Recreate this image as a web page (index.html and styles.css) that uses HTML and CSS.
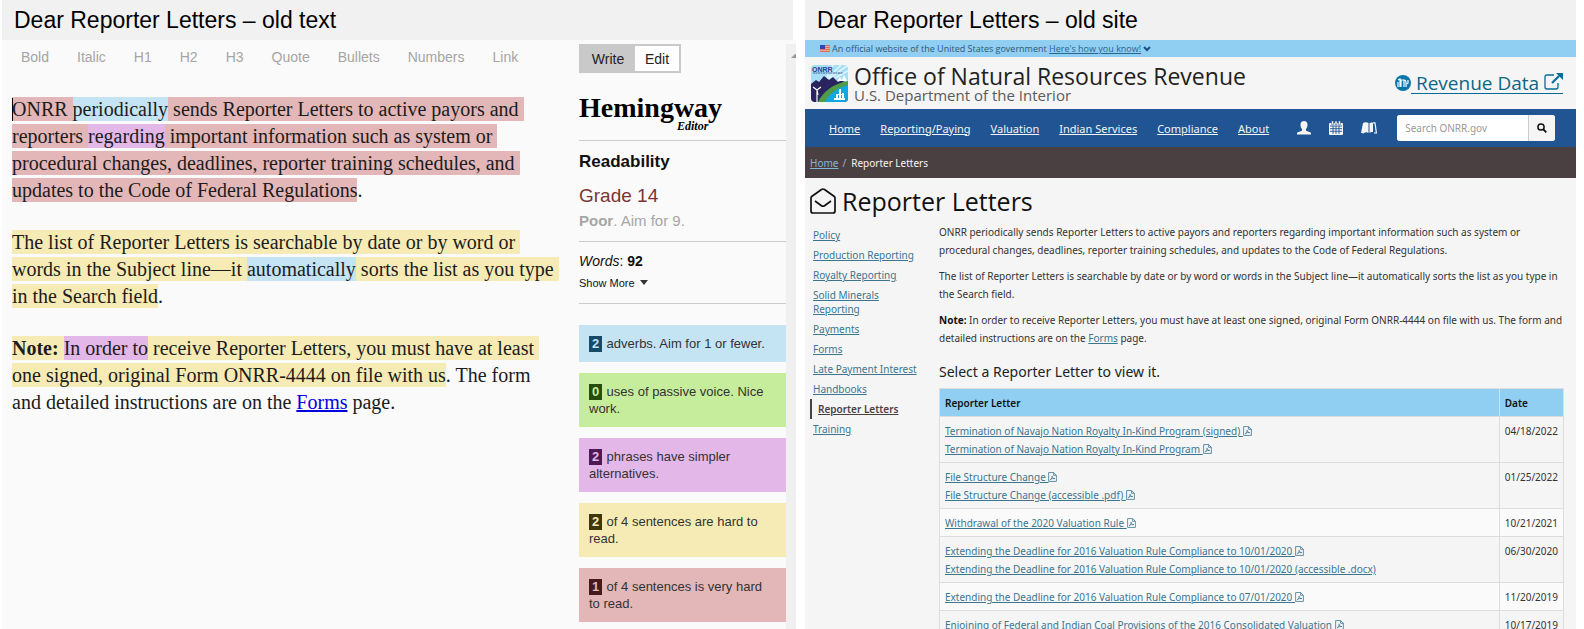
FILE: index.html
```html
<!DOCTYPE html>
<html lang="en">
<head>
<meta charset="utf-8">
<title>Dear Reporter Letters</title>
<link rel="stylesheet" href="styles.css">
</head>
<body>
<svg width="0" height="0" class="defs" aria-hidden="true">
  <symbol id="pdf" viewBox="0 0 16 18"><path d="M1 1h9l5 5v11H1zM10 1v5h5M3.500 14.500c2-1 4-4 3.800-7.500M7.500 8c.5 2.500 2 4 5 4M4.500 13c2-1 4.500-1.500 7-1.300" fill="none" stroke="currentColor" stroke-width="1.400"/></symbol>
</svg>
<div class="compare">
  <section class="pane pane-text">
    <h2 class="pane-title">Dear Reporter Letters – old text</h2>
    <div class="editor">
      <div class="writing">
        <div class="tools">
          <button>Bold</button><button>Italic</button><button>H1</button><button>H2</button><button>H3</button><button>Quote</button><button>Bullets</button><button>Numbers</button><button>Link</button>
        </div>
        <div class="draft">
          <p><span class="caret"></span><mark class="red">ONRR <mark class="blue">periodically</mark> sends Reporter Letters to active payors and&nbsp;<br>reporters <mark class="purple">regarding</mark> important information such as system or&nbsp;<br>procedural changes, deadlines, reporter training schedules, and&nbsp;<br>updates to the Code of Federal Regulations</mark>.</p>
          <p><mark class="yellow">The list of Reporter Letters is searchable by date or by word or&nbsp;<br>words in the Subject line—it <mark class="blue">automatically</mark> sorts the list as you type&nbsp;<br>in the Search field</mark>.</p>
          <p><mark class="yellow"><b>Note:</b> <mark class="purple">In order to</mark> receive Reporter Letters, you must have at least&nbsp;<br>one signed, original Form ONRR-4444 on file with us</mark>. The form <br>and detailed instructions are on the <a href="#">Forms</a> page.</p>
        </div>
      </div>
      <aside class="stats">
        <div class="modes"><button class="on">Write</button><button>Edit</button></div>
        <div class="brand">Hemingway<span class="brand-sub">Editor</span></div>
        <div class="grade">
          <h3>Readability</h3>
          <p class="level">Grade 14</p>
          <p class="aim"><b>Poor</b>. Aim for 9.</p>
        </div>
        <div class="words">
          <p><i>Words</i>: <b>92</b></p>
          <button class="more">Show More <svg viewBox="0 0 8 5" width="8" height="5"><path d="M0 0h8L4 5z" fill="#333"/></svg></button>
        </div>
        <ul class="cards">
          <li class="blue"><b>2</b> adverbs. Aim for 1 or fewer.</li>
          <li class="green"><b>0</b> uses of passive voice. Nice<br>work.</li>
          <li class="purple"><b>2</b> phrases have simpler<br>alternatives.</li>
          <li class="yellow"><b>2</b> of 4 sentences are hard to<br>read.</li>
          <li class="red"><b>1</b> of 4 sentences is very hard<br>to read.</li>
        </ul>
      </aside>
      <div class="scroll"><svg viewBox="0 0 5 4" width="5" height="4"><path d="M0 4L4 0h1v4z" fill="#999"/></svg></div>
    </div>
  </section>

  <section class="pane pane-site">
    <h2 class="pane-title">Dear Reporter Letters – old site</h2>
    <div class="gov">
      <svg viewBox="0 0 10 7" width="10" height="7"><path fill="#f4a08f" d="M0 0h10v7H0z"/><path stroke="#e0604f" stroke-width=".8" d="M0 .5h10M0 2.500h10M0 4.500h10M0 6.500h10"/><path fill="#3344bb" d="M0 0h5v4H0z"/></svg>
      <span>An official website of the United States government <a href="#">Here's how you know! </a></span>
      <svg viewBox="0 0 8 6" width="8" height="6"><path d="M1 1l3 3 3-3" fill="none" stroke="#1d4e89" stroke-width="2"/></svg>
    </div>
    <header class="site-head">
      <svg class="logo" viewBox="0 0 37 37" width="37" height="37">
        <defs><clipPath id="lc"><rect width="37" height="37" rx="4"/></clipPath></defs>
        <g clip-path="url(#lc)">
          <path fill="#a5def5" d="M0 0h37v37H0z"/>
          <path d="M37 0L18 14M30 0L16 14M37 6L20 15M22 0l-6 12" stroke="#e3f6fd" stroke-width="1.500"/>
          <path fill="#29235f" d="M0 19l5-4 3 2 5-6 5 4 4-3 5 5 4-2 6 5v17H0z"/>
          <path fill="#12a7df" d="M10 37c6-8 14-15 27-19v19z"/>
          <path d="M7 37c5-10 14-18 30-21v4C25 23 18 29 14 37z" fill="#4f9b48"/>
          <path fill="#fff" d="M26 16l3-4 2 3 2-5 3 6zM23 33h11v2H23zM25 29h8v1h-8zM28 24h2v9h-2zM25 29h2v4h-2zM31 28h2v5h-2z"/>
          <path d="M6 25v12M6 25l-4-3M6 25l4-3M6 25l1 5" stroke="#fff" stroke-width="1.200"/>
          <path d="M2 8h30" stroke="#45659a" stroke-width="1" stroke-dasharray="2 .5"/>
          <text x="1" y="7" class="logo-text">ONRR</text>
        </g>
      </svg>
      <div class="agency"><h1>Office of Natural Resources Revenue</h1><p>U.S. Department of the Interior</p></div>
      <a class="data" href="#"><svg viewBox="0 0 16 16" width="16" height="16"><circle cx="8" cy="8" r="8" fill="#0b76a8"/><path d="M3 5l2-1v8M6 12V5h3v7M9 5c2 0 2 1 2 3v4M13 5v3l-1 1M3 7v5" fill="none" stroke="#fff" stroke-width="1.200"/></svg><span>&nbsp;Revenue Data <svg viewBox="0 0 19 17" width="19" height="17"><path d="M10 2H3Q1 2 1 4v10q0 2 2 2h9q2 0 2-2v-4" fill="none" stroke="#046b99" stroke-width="1.300"/><path d="M8 10l7-7" stroke="#046b99" stroke-width="2.200"/><path d="M12 0h7v7z" fill="#046b99"/></svg></span></a>
    </header>
    <nav class="bar">
      <a href="#">Home</a><a href="#">Reporting/Paying</a><a href="#">Valuation</a><a href="#">Indian Services</a><a href="#">Compliance</a><a href="#">About</a>
      <div class="icons">
        <svg viewBox="0 0 14 14" width="14" height="14"><path fill="#f5f5f5" d="M7 0c2.300 0 3.500 1.500 3.500 3.800C10.500 6 9.800 7 9 8v1.500c1 1 4.500 1.300 5 2.500v1.500H0V12c.5-1.200 4-1.500 5-2.500V8c-.8-1-1.500-2-1.500-4.200C3.500 1.500 4.700 0 7 0z"/></svg>
        <svg viewBox="0 0 14 14" width="14" height="14"><path fill="#f5f5f5" d="M1 2h12q1 0 1 1v10q0 1-1 1H1q-1 0-1-1V3q0-1 1-1z"/><path fill="#f5f5f5" stroke="#205493" stroke-width=".5" d="M2.500 0h2v3.500h-2zM6 0h2v3.500H6zM9.500 0h2v3.500h-2z"/><path stroke="#205493" stroke-width=".9" d="M1 5h12M1 7.700h12M1 10.300h12M4 5v8M7 5v8M10 5v8"/></svg>
        <svg viewBox="0 0 16 12" width="16" height="12"><path fill="#f5f5f5" d="M2 1q3-1.500 5.500 0V11Q5 9.500 3 11l-1 .8L1.500 11H0zM8.500 1Q10 0 12 .7V10q-2-.5-3.500 1z"/><path fill="none" stroke="#f5f5f5" stroke-width="1.200" d="M12 .9h2L15.400 11H13"/></svg>
      </div>
      <form class="search"><input type="text" placeholder="Search ONRR.gov" aria-label="Search ONRR.gov"><button type="button" aria-label="Search"><svg viewBox="0 0 10 10" width="10" height="10"><circle cx="4" cy="4" r="3.100" fill="none" stroke="#111" stroke-width="1.500"/><path d="M6.200 6.200L9.300 9.300" stroke="#111" stroke-width="1.900"/></svg></button></form>
    </nav>
    <div class="crumbs"><a href="#">Home</a><span class="slash">/</span><span>Reporter Letters</span></div>
    <div class="page-title">
      <svg viewBox="0 0 26 26" width="26" height="26"><path d="M1 10q0-1 1-1.700L11.500 1.500q1.500-1 3 0L24 8.300q1 .7 1 1.700v13q0 2-2 2H3q-2 0-2-2zM5 13l6.500 4.700q1.500 1 3 0L21 13" fill="none" stroke="#111" stroke-width="1.700"/></svg>
      <h1>Reporter Letters</h1>
    </div>
    <div class="site-body">
      <ul class="side">
        <li><a href="#">Policy</a></li><li><a href="#">Production Reporting</a></li><li><a href="#">Royalty Reporting</a></li><li><a href="#">Solid Minerals<br>Reporting</a></li><li><a href="#">Payments</a></li><li><a href="#">Forms</a></li><li><a href="#">Late Payment Interest</a></li><li><a href="#">Handbooks</a></li><li class="current"><a href="#">Reporter Letters</a></li><li><a href="#">Training</a></li>
      </ul>
      <main>
        <p>ONRR periodically sends Reporter Letters to active payors and reporters regarding important information such as system or<br>procedural changes, deadlines, reporter training schedules, and updates to the Code of Federal Regulations.</p>
        <p>The list of Reporter Letters is searchable by date or by word or words in the Subject line—it automatically sorts the list as you type in<br>the Search field.</p>
        <p><b>Note:</b> In order to receive Reporter Letters, you must have at least one signed, original Form ONRR-4444 on file with us. The form and<br>detailed instructions are on the <a href="#">Forms</a> page.</p>
        <h2>Select a Reporter Letter to view it.</h2>
        <table>
          <thead><tr><th>Reporter Letter</th><th class="date">Date</th></tr></thead>
          <tbody>
            <tr><td><a href="#">Termination of Navajo Nation Royalty In-Kind Program (signed) <svg><use href="#pdf"/></svg></a><br><a href="#">Termination of Navajo Nation Royalty In-Kind Program <svg><use href="#pdf"/></svg></a></td><td>04/18/2022</td></tr>
            <tr><td><a href="#">File Structure Change <svg><use href="#pdf"/></svg></a><br><a href="#">File Structure Change (accessible .pdf) <svg><use href="#pdf"/></svg></a></td><td>01/25/2022</td></tr>
            <tr class="light"><td><a href="#">Withdrawal of the 2020 Valuation Rule <svg><use href="#pdf"/></svg></a></td><td>10/21/2021</td></tr>
            <tr><td><a href="#">Extending the Deadline for 2016 Valuation Rule Compliance to 10/01/2020 <svg><use href="#pdf"/></svg></a><br><a href="#">Extending the Deadline for 2016 Valuation Rule Compliance to 10/01/2020 (accessible .docx)</a></td><td>06/30/2020</td></tr>
            <tr class="light"><td><a href="#">Extending the Deadline for 2016 Valuation Rule Compliance to 07/01/2020 <svg><use href="#pdf"/></svg></a></td><td>11/20/2019</td></tr>
            <tr><td><a href="#">Enjoining of Federal and Indian Coal Provisions of the 2016 Consolidated Valuation <svg><use href="#pdf"/></svg></a></td><td>10/17/2019</td></tr>
          </tbody>
        </table>
      </main>
    </div>
  </section>
</div>
</body>
</html>
```

FILE: styles.css
```css
* { box-sizing: border-box; }
body { margin: 0; background: #fff; font-family: "Liberation Sans", Arial, sans-serif; }
h1, h2, h3, p, ul { margin: 0; padding: 0; font-weight: 400; }
ul { list-style: none; }
button { font: inherit; color: inherit; background: none; border: 0; padding: 0; }
.defs { position: absolute; }

.compare { display: grid; grid-template-columns: 794fr 771fr; gap: 9px; height: 100vh; padding: 0 8px 0 2px; overflow: hidden; }
.pane { display: flex; flex-direction: column; min-width: 0; overflow: hidden; }
.pane-title { flex: none; height: 40px; padding-left: 12px; background: #f1f1f1; color: #000; font-size: 23px; line-height: 40px; }
.pane-text .pane-title { margin-right: 3px; }

.editor { flex: 1; display: flex; min-height: 0; background: #fafafa; }
.writing { flex: 1; min-width: 0; padding-left: 10px; white-space: nowrap; }
.tools { display: flex; gap: 28px; padding: 9px 0 0 9px; color: #a5a5a5; font-size: 14px; line-height: 16px; }
.draft { padding-top: 31px; color: #1c1c1c; font: 20px/27px "Liberation Serif", "Times New Roman", serif; }
.draft p { position: relative; margin-bottom: 25px; }
.draft mark { color: inherit; padding: 1px 0; }
.draft a { color: #0000e0; }
.caret { position: absolute; left: 0; top: 2px; width: 1px; height: 23px; background: #000; }
.red { background: #e3b7b8; }
.blue { background: #c4e3f3; }
.purple { background: #e3b7e8; }
.yellow { background: #f7ebb5; }
.green { background: #c5ed9c; }

.stats { flex: none; width: 207px; padding-top: 4px; white-space: nowrap; }
.modes { display: inline-flex; height: 29px; border: 2px solid #c9c9c9; color: #222; font-size: 14px; }
.modes button { width: 44px; background: #fff; }
.modes .on { width: 54px; background: #c9c9c9; }
.brand { position: relative; margin-top: 19px; height: 48px; color: #000; font: bold 28px/32px "Liberation Serif", serif; }
.brand-sub { position: absolute; left: 98px; top: 27px; font: italic bold 12px/14px "Liberation Serif", serif; }
.grade { height: 101px; padding-top: 9px; border-top: 1px solid #ccc; }
.grade h3 { color: #111; font-size: 17px; font-weight: 700; line-height: 24px; }
.level { margin-top: 9px; color: #7c3434; font-size: 19px; line-height: 26px; }
.aim { color: #a6a6a6; font-size: 15px; line-height: 24px; }
.words { height: 63px; padding-top: 9px; border-top: 1px solid #ccc; border-bottom: 1px solid #ccc; color: #111; font-size: 14px; line-height: 20px; }
.more { display: block; margin-top: 5px; font-size: 11px; line-height: 14px; }
.more svg { margin: 0 0 2px 2px; }
.cards { display: grid; gap: 11px; margin-top: 21px; color: #333; font-size: 13px; line-height: 17px; }
.cards li { padding: 10px; }
.cards b { display: inline-block; width: 13px; height: 16px; margin-right: 1px; line-height: 16px; text-align: center; color: #c4e3f3; background: #174a68; }
.cards .green b { color: #c5ed9c; background: #274d0c; }
.cards .purple b { color: #e3b7e8; background: #4e1a54; }
.cards .yellow b { color: #f7ebb5; background: #3f370b; }
.cards .red b { color: #e3b7b8; background: #441a1c; }
.scroll { flex: none; width: 10px; margin-top: 4px; padding-top: 7px; background: #f0f0f0; line-height: 4px; text-align: right; }

.pane-site { background: #f5f5f5; color: #333; font-family: "Noto Sans", "Open Sans", sans-serif; font-size: 11px; white-space: nowrap; }
.pane-site .pane-title { font-family: "Liberation Sans", Arial, sans-serif; }
.pane-site a { color: #3b7590; }
.gov { flex: none; display: flex; align-items: center; gap: 2px; height: 17px; padding-left: 15px; background: #90cef2; color: #2f5873; font-size: 9px; }
.gov span { font-family: "Open Sans", sans-serif; }
.gov a { color: #2a6590; }
.site-head { flex: none; display: flex; align-items: center; height: 52px; padding: 0 13px 0 6px; font-family: "Open Sans", sans-serif; }
.logo { flex: none; }
.logo-text { font: bold 7px "Liberation Sans", sans-serif; fill: #26408b; }
.agency { margin-left: 6px; }
.agency h1 { color: #222; font-size: 23px; line-height: 24px; }
.agency p { color: #5b5b5b; font-size: 15px; line-height: 15px; }
.data { display: flex; align-items: center; margin-left: auto; font-size: 19px; line-height: 20px; text-decoration: none; }
.data span { border-bottom: 1px solid #046b99; }
.pane-site .data { color: #0b6788; }
.bar { flex: none; display: flex; align-items: center; gap: 20px; height: 38px; padding: 0 21px 0 24px; background: #205493; }
.pane-site .bar a { color: #f5f5f5; }
.icons { display: flex; align-items: center; gap: 18px; margin-left: 8px; }
.search { display: flex; width: 160px; height: 26px; margin-left: auto; border-radius: 3px; overflow: hidden; background: #fff; }
.search input { flex: 1; min-width: 0; border: 0; padding: 0 8px; background: #fff; font: 10px "Noto Sans", sans-serif; }
.search input::placeholder { color: #999; }
.search button { width: 27px; border-left: 1px solid #ccc; background: #f5f5f5; }
.crumbs { flex: none; display: flex; align-items: center; height: 31px; padding-left: 5px; background: #4a4042; color: #f5f5f5; font-size: 10px; }
.pane-site .crumbs a { color: #81b5d6; }
.slash { margin: 0 5px 0 4px; color: #aac; }
.page-title { flex: none; display: flex; align-items: center; gap: 6px; height: 45px; padding: 1px 0 0 5px; color: #111; font-family: "Open Sans", sans-serif; }
.page-title h1 { font-size: 25px; line-height: 32px; }
.site-body { display: grid; grid-template-columns: 129px 1fr; padding: 0 12px 0 5px; }
.side { padding-top: 2px; font-size: 10px; line-height: 14px; }
.side li { padding: 3px 0 3px 3px; }
.side .current { border-left: 2px solid #4a4042; padding-left: 6px; font-weight: 600; }
.pane-site .side .current a { color: #4a4042; }
main { min-width: 0; font-size: 10px; line-height: 18px; }
main p { margin-bottom: 8px; }
main p b { color: #111; }
main h2 { margin-top: 15px; color: #222; font-size: 14px; line-height: 20px; }
table { width: 100%; margin-top: 6px; border-collapse: collapse; }
th, td { padding: 5px 5px 4px; border: 1px solid #ddd; text-align: left; vertical-align: top; }
th { background: #90cef2; color: #111; font-weight: 600; }
.date { width: 64px; }
.light { background: #fafafa; }
td svg { width: 9px; height: 10px; vertical-align: -1px; }
```
